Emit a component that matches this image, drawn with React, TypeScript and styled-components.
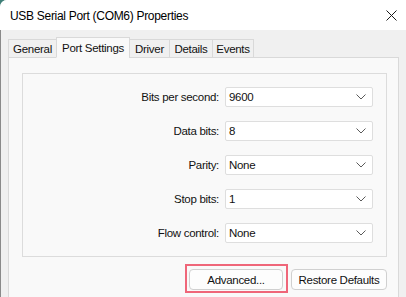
import styled, { createGlobalStyle } from "styled-components";

const tabs = [
  { name: "General", width: 49 },
  { name: "Port Settings", width: 74 },
  { name: "Driver", width: 41 },
  { name: "Details", width: 44 },
  { name: "Events", width: 42 },
];

const settings = [
  { label: "Bits per second:", value: "9600" },
  { label: "Data bits:", value: "8" },
  { label: "Parity:", value: "None" },
  { label: "Stop bits:", value: "1" },
  { label: "Flow control:", value: "None" },
];

const App = () => {
  return (
    <>
      <GlobalStyle />
      <Window>
        <TitleBar>
          <Title>USB Serial Port (COM6) Properties</Title>
          <CloseButton title="Close">
            <svg width="11" height="11" viewBox="0 0 11 11">
              <path d="M0.5 0.5 L10.5 10.5 M10.5 0.5 L0.5 10.5" stroke="#1a1a1a" strokeWidth="1" />
            </svg>
          </CloseButton>
        </TitleBar>
        <Body>
          <TabStrip>
            {tabs.map((t) => (
              <Tab key={t.name} $width={t.width} $active={t.name === "Port Settings"}>
                {t.name}
              </Tab>
            ))}
          </TabStrip>
          <Panel>
            <GroupBox>
              {settings.map((s) => (
                <Row key={s.label}>
                  <Label>{s.label}</Label>
                  <Select>
                    <span>{s.value}</span>
                    <svg width="10" height="6" viewBox="0 0 10 6">
                      <path d="M0.5 0.5 L5 5 L9.5 0.5" fill="none" stroke="#5a5a5a" strokeWidth="1" />
                    </svg>
                  </Select>
                </Row>
              ))}
            </GroupBox>
            <ButtonRow>
              <Highlight>
                <Button $width={94}>Advanced...</Button>
              </Highlight>
              <Button $width={96}>Restore Defaults</Button>
            </ButtonRow>
          </Panel>
        </Body>
      </Window>
    </>
  );
};

export default App;

const GlobalStyle = createGlobalStyle`
  body {
    margin: 0;
    background: #3f7f78;
    font-family: "Liberation Sans", Arial, sans-serif;
    font-size: 11.5px;
    letter-spacing: -0.3px;
    color: #111;
  }
`;

const Window = styled.div`
  width: 406px;
  height: 297px;
  overflow: hidden;
  background: #f0f0f0;
  border-top-left-radius: 7px;
  display: flex;
  flex-direction: column;
`;

const TitleBar = styled.div`
  height: 30px;
  flex-shrink: 0;
  background: #ffffff;
  display: flex;
  align-items: center;
  justify-content: space-between;
  padding: 0 9px 0 10px;
`;

const Title = styled.div`
  font-size: 12px;
  color: #000;
  margin-top: 1px;
`;

const CloseButton = styled.button`
  background: none;
  border: none;
  padding: 0;
  display: flex;
`;

const Body = styled.div`
  flex: 1;
  border-left: 1px solid #8a8a8a;
  padding: 7px 7px 0 7px;
  display: flex;
  flex-direction: column;
`;

const TabStrip = styled.div`
  display: flex;
  align-items: flex-end;
  height: 21px;
  position: relative;
  z-index: 1;
`;

const Tab = styled.div<{ $width: number; $active?: boolean }>`
  width: ${(p) => p.$width}px;
  height: ${(p) => (p.$active ? 21 : 19)}px;
  box-sizing: border-box;
  display: flex;
  align-items: center;
  justify-content: center;
  border: 1px solid #d9d9d9;
  border-bottom: ${(p) => (p.$active ? "1px solid #f9f9f9" : "1px solid #d9d9d9")};
  margin-left: -1px;
  background: ${(p) => (p.$active ? "#f9f9f9" : "#f0f0f0")};
  padding-top: ${(p) => (p.$active ? 0 : 1)}px;
  &:first-child {
    margin-left: 0;
  }
`;

const Panel = styled.div`
  flex: 1;
  margin-top: -1px;
  background: #f9f9f9;
  border: 1px solid #d9d9d9;
  border-bottom: none;
  padding: 15px 11px 0 13px;
`;

const GroupBox = styled.div`
  border: 1px solid #dcdcdc;
  padding: 13px 13px 13px 0;
  display: flex;
  flex-direction: column;
  gap: 14px;
`;

const Row = styled.div`
  display: grid;
  grid-template-columns: 1fr 148px;
  column-gap: 6px;
  align-items: center;
`;

const Label = styled.div`
  text-align: right;
`;

const Select = styled.div`
  height: 20px;
  box-sizing: border-box;
  background: #ffffff;
  border: 1px solid #dedede;
  border-radius: 2px;
  display: flex;
  align-items: center;
  justify-content: space-between;
  padding: 0 6px 0 3px;
`;

const ButtonRow = styled.div`
  display: flex;
  justify-content: flex-end;
  align-items: flex-start;
  gap: 8px;
  margin-top: 12px;
`;

// pink annotation box drawn around the Advanced button
const Highlight = styled.div`
  display: flex;
  margin: -5px -5px -3px -4px;
  padding: 3px 3px 1px 2px;
  border: 2px solid #ef6679;
`;

const Button = styled.button<{ $width: number }>`
  height: 21px;
  width: ${(p) => p.$width}px;
  box-sizing: border-box;
  background: #fdfdfd;
  border: 1px solid #d0d0d0;
  border-radius: 4px;
  font-family: "Liberation Sans", Arial, sans-serif;
  font-size: 11.5px;
  letter-spacing: -0.3px;
  color: #111;
  padding: 0;
`;
